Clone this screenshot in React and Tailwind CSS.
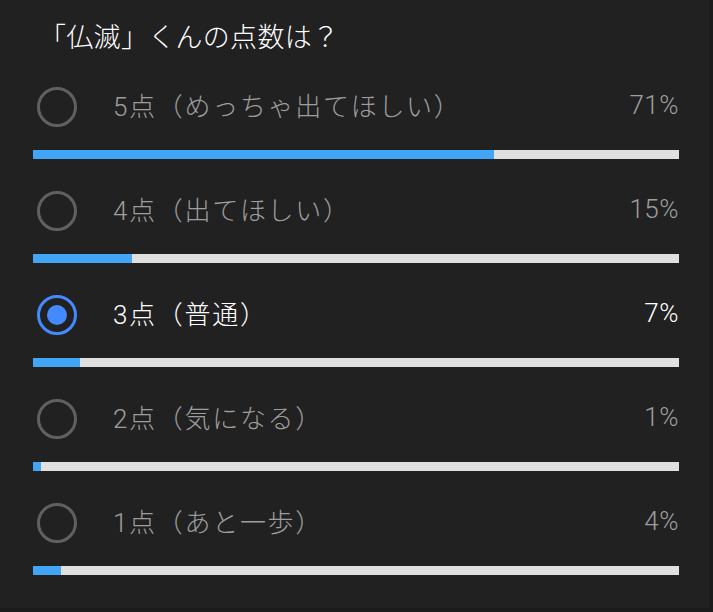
import React from 'react'

const options = [
  { label: '5点（めっちゃ出てほしい）', pct: 71 },
  { label: '4点（出てほしい）', pct: 15 },
  { label: '3点（普通）', pct: 7, selected: true },
  { label: '2点（気になる）', pct: 1 },
  { label: '1点（あと一歩）', pct: 4 },
]

const font = { fontFamily: 'Roboto, "Noto Sans CJK JP", sans-serif' }

function Radio({ selected }) {
  if (selected) {
    return (
      <span className="flex h-[40px] w-[40px] shrink-0 items-center justify-center rounded-full border-[3.5px] border-[#448aff]">
        <span className="block h-[20px] w-[20px] rounded-full bg-[#448aff]" />
      </span>
    )
  }
  return <span className="block h-[40px] w-[40px] shrink-0 rounded-full border-[3.5px] border-[#606060]" />
}

export default function App() {
  return (
    <div className="h-[612px] w-[713px] bg-[#1b1b1b]" style={font}>
      <div className="h-[608px] w-[709px] bg-[#212121] pl-[33px] pr-[30px]">
        {/* title */}
        <div className="flex h-[67px] items-center pl-[6px] pt-[9px] text-[27px] font-light tracking-[0.3px] text-white">
          「仏滅」くんの点数は？
        </div>

        {options.map((o) => (
          <div key={o.label} className="mb-[12px]">
            <div className="flex h-[80px] items-center">
              <span className="ml-[4px]">
                <Radio selected={o.selected} />
              </span>
              <span
                className={
                  'ml-[36px] flex-1 text-[26px] font-light tracking-[1.7px] ' +
                  (o.selected ? 'text-white' : 'text-[#9e9e9e]')
                }
              >
                {o.label}
              </span>
              <span
                className={
                  'pb-[3px] text-[26px] font-light tracking-[0.5px] ' +
                  (o.selected ? 'text-white' : 'text-[#9e9e9e]')
                }
              >
                {o.pct}%
              </span>
            </div>
            <div className="mt-[3px] h-[9px] w-full bg-[#e0e0e0]">
              <div className="h-full bg-[#42a5f5]" style={{ width: `calc(${o.pct}% + 2px)` }} />
            </div>
          </div>
        ))}
      </div>
    </div>
  )
}
